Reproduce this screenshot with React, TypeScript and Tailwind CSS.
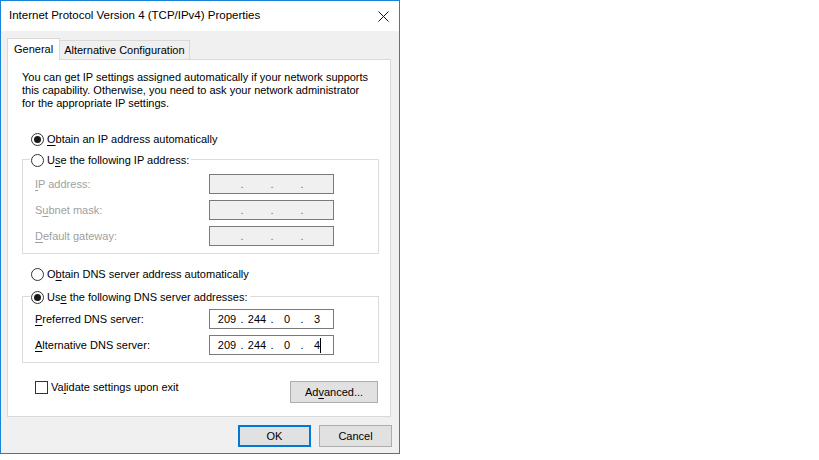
import { FC, Fragment, ReactNode } from "react";

// small helpers for the classic Win32 dialog look

const Key: FC<{ children: ReactNode }> = ({ children }) => (
  <span className="underline underline-offset-[2px]">{children}</span>
);

const Radio: FC<{ checked?: boolean }> = ({ checked }) => (
  <span className="w-[13px] h-[13px] rounded-full border border-[#333333] bg-white flex items-center justify-center shrink-0">
    {checked && <span className="w-[7px] h-[7px] rounded-full bg-[#1a1a1a]" />}
  </span>
);

interface IpProps {
  values: string[];
  disabled?: boolean;
  caret?: boolean;
}

const IpField: FC<IpProps> = (props) => {
  return (
    <div
      className={
        props.disabled
          ? "h-[20px] w-[125px] border border-[#7a7a7a] bg-[#f0f0f0] text-[#6d6d6d] flex items-center pl-[5px]"
          : "h-[20px] w-[125px] border border-[#7a7a7a] bg-white text-black flex items-center pl-[5px]"
      }
    >
      {props.values.map((v, i) => (
        <Fragment key={i}>
          <span className="w-[24px] text-center leading-[14px] relative">
            {v}
            {props.caret && i === 3 && (
              <span className="absolute left-[15px] top-[0px] w-px h-[15px] bg-black" />
            )}
          </span>
          {i < 3 && <span className="w-[6px] text-center leading-[14px]">.</span>}
        </Fragment>
      ))}
    </div>
  );
};

const Row: FC<{ label: ReactNode; disabled?: boolean; children: ReactNode }> = (props) => (
  <div className="flex items-center h-[20px]">
    <span
      className={
        props.disabled
          ? "w-[186px] pl-[12px] text-[#a0a0a0]"
          : "w-[186px] pl-[12px] text-black"
      }
    >
      {props.label}
    </span>
    {props.children}
  </div>
);

const Button: FC<{ children: ReactNode; primary?: boolean; className?: string }> = (props) => (
  <button
    type="button"
    className={
      props.primary
        ? "h-[22px] w-[73px] border-2 border-[#0078d7] bg-[#e1e1e1] flex items-center justify-center " +
          (props.className ?? "")
        : "h-[22px] w-[73px] border border-[#adadad] bg-[#e1e1e1] flex items-center justify-center " +
          (props.className ?? "")
    }
  >
    {props.children}
  </button>
);

export default function App() {
  return (
    <div className="w-[819px] h-[460px] bg-white text-[11px] text-black font-['Liberation_Sans',Arial,sans-serif]">
      <div className="w-[400px] h-[454px] border border-[#1883d7] bg-[#f0f0f0] flex flex-col">
        {/* title bar */}
        <div className="h-[30px] bg-white flex items-center justify-between pl-[8px] pr-[10px]">
          <span className="text-[11.5px]">Internet Protocol Version 4 (TCP/IPv4) Properties</span>
          <svg width="11" height="11" viewBox="0 0 11 11" className="mt-[1px]">
            <path d="M0.5 0.5 L10.5 10.5 M10.5 0.5 L0.5 10.5" stroke="#111" strokeWidth="1" />
          </svg>
        </div>

        {/* tabs */}
        <div className="flex items-end h-[21px] mt-[7px] pl-[6px] relative z-10">
          <div className="h-[22px] -mb-px px-[6px] bg-white border border-b-0 border-[#d9d9d9] flex items-center">
            General
          </div>
          <div className="h-[19px] -ml-px px-[4px] bg-[#f0f0f0] border border-b-0 border-[#d9d9d9] flex items-center pt-[1px]">
            Alternative Configuration
          </div>
        </div>

        {/* panel */}
        <div className="ml-[6px] w-[384px] h-[358px] bg-white border border-[#d9d9d9] pl-[14px] flex flex-col">
          <p className="mt-[11px] leading-[13px] whitespace-nowrap">
            You can get IP settings assigned automatically if your network supports
            <br />
            this capability. Otherwise, you need to ask your network administrator
            <br />
            for the appropriate IP settings.
          </p>

          <div className="mt-[21px] h-[16px] pl-[9px] flex items-center gap-[3px]">
            <Radio checked />
            <span>
              <Key>O</Key>btain an IP address automatically
            </span>
          </div>

          {/* static IP group */}
          <div className="mt-[12px] w-[357px] border border-[#dcdcdc] flex flex-col pb-[7px]">
            <div className="-mt-[8px] h-[16px] ml-[7px] pl-[1px] pr-[2px] w-fit bg-white flex items-center gap-[3px]">
              <Radio />
              <span>
                U<Key>s</Key>e the following IP address:
              </span>
            </div>
            <div className="mt-[6px] flex flex-col gap-[6px]">
              <Row disabled label={<><Key>I</Key>P address:</>}>
                <IpField disabled values={["", "", "", ""]} />
              </Row>
              <Row disabled label={<>S<Key>u</Key>bnet mask:</>}>
                <IpField disabled values={["", "", "", ""]} />
              </Row>
              <Row disabled label={<><Key>D</Key>efault gateway:</>}>
                <IpField disabled values={["", "", "", ""]} />
              </Row>
            </div>
          </div>

          <div className="mt-[12px] h-[16px] pl-[9px] flex items-center gap-[3px]">
            <Radio />
            <span>
              O<Key>b</Key>tain DNS server address automatically
            </span>
          </div>

          {/* DNS group */}
          <div className="mt-[14px] w-[357px] border border-[#dcdcdc] flex flex-col pb-[7px]">
            <div className="-mt-[8px] h-[16px] ml-[7px] pl-[1px] pr-[2px] w-fit bg-white flex items-center gap-[3px]">
              <Radio checked />
              <span>
                Us<Key>e</Key> the following DNS server addresses:
              </span>
            </div>
            <div className="mt-[4px] flex flex-col gap-[6px]">
              <Row label={<><Key>P</Key>referred DNS server:</>}>
                <IpField values={["209", "244", "0", "3"]} />
              </Row>
              <Row label={<><Key>A</Key>lternative DNS server:</>}>
                <IpField caret values={["209", "244", "0", "4"]} />
              </Row>
            </div>
          </div>

          <div className="mt-[18px] w-[356px] flex items-start justify-between">
            <div className="h-[13px] pl-[13px] flex items-center gap-[3px]">
              <span className="w-[13px] h-[13px] border border-[#333333] bg-white" />
              <span>
                Va<Key>l</Key>idate settings upon exit
              </span>
            </div>
            <Button className="w-[88px]">
              <span>
                Ad<Key>v</Key>anced...
              </span>
            </Button>
          </div>
        </div>

        {/* dialog buttons */}
        <div className="mt-[8px] pr-[7px] flex justify-end gap-[8px]">
          <Button primary>OK</Button>
          <Button>Cancel</Button>
        </div>
      </div>
    </div>
  );
}
